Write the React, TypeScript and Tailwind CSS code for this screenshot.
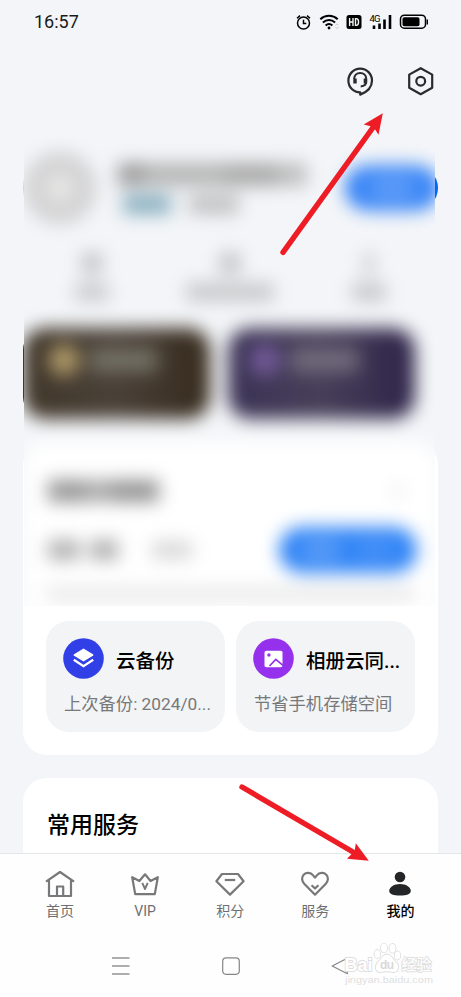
import React from "react";

const fontStack = "font-['Roboto','Noto_Sans_CJK_SC',sans-serif]";

function StatusBar() {
  return (
    <div className="flex h-11 shrink-0 items-center justify-between pl-[34px] pr-[32px]">
      <span className="text-[18px] leading-none text-[#1a1a1a]">16:57</span>
      <svg width="134" height="20" viewBox="295 12 134 20" fill="none" stroke="#000">
        <g strokeWidth="1.5">
          <circle cx="303.5" cy="23" r="6" />
          <path d="M303.5 19.8v3.8h2.8M297 18.2l3-2.6M310 18.2l-3-2.6" />
        </g>
        <g strokeWidth="2">
          <path d="M320.3 19.3c5-4.6 12.400-4.600 17.400 0M322.900 22.500c3.600-3.200 8.600-3.200 12.200 0M325.600 25.600c2-1.800 4.800-1.800 6.800 0" />
        </g>
        <circle cx="329" cy="28" r="1.4" fill="#000" stroke="none" />
        <path d="M335.500 25.500l1.500-1.700 1.500 1.700M335.500 27l1.500 1.700 1.500-1.700" stroke="#ccc" strokeWidth="1" />
        <rect x="346.500" y="15" width="15" height="14" rx="2.500" fill="#000" stroke="none" />
        <path d="M349.600 18v8M353 18v8M349.600 22h3.400M355.500 18.600v6.800h.8c3 0 3-6.800 0-6.800z" stroke="#f3f4f7" strokeWidth="1.4" />
        <text x="369.500" y="22" fontSize="9.500" fill="#000" stroke="none" textLength="11">4G</text>
        <path d="M374 25.500v3.500M379.500 23.500v5.500M384.500 19.500v9.500M390 15v14" strokeWidth="2.6" />
        <rect x="400.500" y="15.200" width="25" height="13" rx="3.800" strokeWidth="1.5" />
        <rect x="402.500" y="17.200" width="17" height="9" rx="1.800" fill="#000" stroke="none" />
        <path d="M427.300 19.500v5" strokeWidth="1.4" />
      </svg>
    </div>
  );
}

function Header() {
  return (
    <div className="flex h-[74px] shrink-0 items-center justify-end gap-[31px] pr-[25px]">
      <svg width="30" height="30" viewBox="345 66 30 30" fill="none" stroke="#292a2d" strokeWidth="2.200">
        <path d="M360.200 94.600v-2.200c-6.600 0-11.800-5-11.800-11.900 0-6.500 5.200-11.900 11.800-11.900s11.800 5.400 11.800 11.900c0 6.500-4.800 11.500-11.800 14.100z" strokeLinejoin="round" />
        <path d="M354.200 79v-.2c0-3.700 2.700-5.700 6-5.700s6 2 6 5.700v3.200c0 2.600-1.800 4-5.500 4.400" strokeWidth="2" />
        <path d="M355 78.500v5M365.400 78.500v5" strokeWidth="3.400" />
      </svg>
      <svg width="30" height="30" viewBox="406 66 30 30" fill="none" stroke="#292a2d" strokeWidth="2.200" strokeLinejoin="round">
        <path d="M420.700 68.200l11.500 6.400v13.200l-11.500 6.400-11.500-6.400V74.600z" />
        <circle cx="420.700" cy="81.200" r="4.400" />
      </svg>
    </div>
  );
}

function Profile() {
  return (
    <div className="flex h-[74px] items-center">
      <div className="flex size-[74px] items-center justify-center rounded-full bg-[#d4d4d5]">
        <div className="size-6 rounded-full bg-[#eaeae8]" />
      </div>
      <div className="ml-[21px] flex w-[192px] flex-col gap-[9px]">
        <div className="flex h-[23px]">
          <div className="w-[26px] bg-[#9c9c9c]" />
          <div className="w-[80px] bg-[#b5b5b5]" />
          <div className="w-[54px] bg-[#a9a9a9]" />
          <div className="w-[29px] bg-[#bebebe]" />
        </div>
        <div className="flex h-[19px] gap-[18px] pl-[5px]">
          <div className="w-[48px] bg-[#86adbe]" />
          <div className="w-[50px] bg-[#c0c0c1]" />
        </div>
      </div>
      <div className="ml-auto flex h-[44px] w-[92px] items-center justify-center rounded-full bg-[#0566f5]">
        <div className="flex h-[36px] w-[78px] items-center justify-center rounded-full bg-white/25">
          <div className="h-5 w-9 bg-white/15" />
        </div>
      </div>
    </div>
  );
}

function Stats() {
  return (
    <div className="mt-[28px] grid grid-cols-3 justify-items-center">
      <div className="flex flex-col items-center gap-[10px]">
        <div className="h-[20px] w-[20px] bg-[#c0c1c3]" />
        <div className="h-[18px] w-[34px] bg-[#c9cacc]" />
      </div>
      <div className="flex flex-col items-center gap-[10px]">
        <div className="h-[20px] w-[20px] bg-[#bebfc1]" />
        <div className="h-[18px] w-[88px] bg-[#c6c7c9]" />
      </div>
      <div className="flex flex-col items-center gap-[10px]">
        <div className="h-[20px] w-[10px] bg-[#c6c7c9]" />
        <div className="h-[18px] w-[34px] bg-[#c6c7c9]" />
      </div>
    </div>
  );
}

function Promos() {
  return (
    <div className="mt-[27px] flex gap-[18px]">
      <div className="h-[91px] w-[187px] rounded-[22px] bg-linear-to-r from-[#41372a] via-[#4a4139] to-[#362a1c] px-[25px] pt-[16px]">
        <div className="flex items-center gap-[10px]">
          <div className="size-[32px] rounded-full bg-[#ac9767]" />
          <div className="h-[24px] w-[68px] bg-[#727064]" />
        </div>
      </div>
      <div className="h-[91px] w-[187px] rounded-[22px] bg-linear-to-r from-[#3b3255] via-[#474059] to-[#2e2449] px-[21px] pt-[16px]">
        <div className="flex items-center gap-[10px]">
          <div className="size-[32px] rounded-full bg-[#715997]" />
          <div className="h-[24px] w-[68px] bg-[#716b7c]" />
        </div>
      </div>
    </div>
  );
}

function CloudTile({ icon, title, detail }: { icon?: React.ReactNode; title?: string; detail?: string }) {
  return (
    <div className="h-[111px] w-[179px] rounded-[23px] bg-[#f3f4f6] pl-[17px] pt-[17px]">
      <div className="flex items-center gap-3">
        {icon}
        <span className="mt-[6px] whitespace-nowrap text-[19.500px] font-medium leading-[28px] text-black">{title}</span>
      </div>
      <div className="mt-[13px] whitespace-nowrap pl-px text-[17.300px] leading-6 text-[#77787a]">{detail}</div>
    </div>
  );
}

function CloudCard({ children }: { children: React.ReactNode }) {
  return (
    <div className="mt-[22px] h-[314px] shrink-0 rounded-[24px] bg-white px-[23px] pt-[39px]">
      <div className="flex h-[22px] items-center justify-between pl-[2px] pr-[11px]">
        <div className="flex">
          <div className="h-[22px] w-[38px] bg-[#969696]" />
          <div className="h-[22px] w-[25px] bg-[#aaaaaa]" />
          <div className="h-[22px] w-[48px] bg-[#949494]" />
        </div>
        <div className="size-[12px] bg-[#ededed]" />
      </div>
      <div className="mt-[24px] flex h-[48px] items-center">
        <div className="ml-[2px] h-[20px] w-[32px] bg-[#b0b0b0]" />
        <div className="ml-[10px] h-[20px] w-[28px] bg-[#aeaeae]" />
        <div className="ml-[34px] h-[18px] w-[40px] bg-[#d8d8d8]" />
        <div className="ml-auto mr-[-2px] flex h-[46px] w-[138px] items-center justify-center gap-4 rounded-full bg-[#2e83f6]">
          <div className="h-6 w-[38px] bg-white/20" />
          <div className="h-6 w-[38px] bg-white/10" />
        </div>
      </div>
      <div className="mt-[13px] h-[14px] bg-[#e8e8e8]" />
      <div className="mt-[20px] flex gap-[11px]">{children}</div>
    </div>
  );
}

const layersIcon = (
  <svg width="41" height="41" viewBox="0 0 41 41" className="shrink-0">
    <circle cx="20.500" cy="20.500" r="20.300" fill="#303fe6" />
    <path d="M20.500 10.400l9.400 5.800c.8.500.8 1 0 1.500l-9.400 5.800-9.400-5.800c-.8-.5-.8-1 0-1.500z" fill="#fff" />
    <path d="M10.800 21.700l9.700 6.400 9.700-6.400" fill="none" stroke="#fff" strokeWidth="2.300" />
  </svg>
);

const photoIcon = (
  <svg width="41" height="41" viewBox="0 0 41 41" className="shrink-0">
    <circle cx="20.500" cy="20.500" r="20.300" fill="#9530ed" />
    <rect x="11.500" y="12.700" width="18" height="16.500" rx="1.800" fill="#fff" />
    <circle cx="15.900" cy="17" r="1.700" fill="#9530ed" />
    <path d="M16.500 28l6.300-6.600 7.200 6" fill="none" stroke="#9530ed" strokeWidth="1.700" />
  </svg>
);

function PrivacyBlur() {
  return (
    <div aria-hidden="true" className="absolute left-[24px] top-[18px] h-[470px] w-[411px] overflow-hidden bg-[#f3f5f8]">
      <div className="-ml-[24px] -mt-[18px] flex w-[461px] flex-col bg-[#f3f5f8] px-[23px] pt-[33px] blur-[9px]">
        <Profile />
        <Stats />
        <Promos />
        <CloudCard>
          <CloudTile />
          <CloudTile />
        </CloudCard>
      </div>
    </div>
  );
}

const tabs = [
  {
    label: "首页",
    icon: <path d="M2 12.600L16 3l14 9.600M5 10.800V27h22V10.800M13 26.500V17.500h6.200v9" />,
  },
  {
    label: "VIP",
    icon: (
      <>
        <path d="M3.200 8.200l3 16.900h19.600l3-16.900-7.200 3.800L16 5.300 10.400 12z" />
        <path d="M13.300 13.800l2.700 6.200 2.700-6.200" strokeWidth="1.900" />
      </>
    ),
  },
  {
    label: "积分",
    icon: (
      <>
        <path d="M8 5h16l5.600 7.200L16 25.600 2.400 12.200z" />
        <path d="M10.800 11h10.400" />
      </>
    ),
  },
  {
    label: "服务",
    icon: (
      <>
        <path d="M16 25.700L5.200 14.700C2.500 11.900 2.500 7.900 4.700 5.700c2.600-2.700 7-2.200 9.200.4L16 8.600l2.100-2.500c2.200-2.600 6.600-3.100 9.200-.4 2.200 2.200 2.200 6.200-.5 9z" />
        <path d="M12.500 16.300l3.500 3.100 3.500-3.100" />
      </>
    ),
  },
  {
    label: "我的",
    active: true,
    icon: (
      <g fill="#252628" stroke="none">
        <circle cx="16" cy="8" r="5.300" />
        <path d="M5.200 21.900c0-4.200 5.200-7 10.800-7s10.800 2.800 10.800 7c0 3.200-4.200 4.500-10.800 4.500S5.200 25.100 5.200 21.900z" />
      </g>
    ),
  },
];

function TabBar() {
  return (
    <nav className="flex h-[80px] pl-[17.500px] pr-[18px] pt-[15px]">
      {tabs.map((t) => (
        <div key={t.label} className="flex flex-1 flex-col items-center">
          <svg width="32" height="30" viewBox="0 0 32 30" fill="none" stroke="#777879" strokeWidth="2.200" strokeLinejoin="round">
            {t.icon}
          </svg>
          <span className={t.active ? "mt-[2px] text-[14px] font-medium leading-5 text-black" : "mt-[2px] text-[14px] leading-5 text-[#6d6e70]"}>
            {t.label}
          </span>
        </div>
      ))}
    </nav>
  );
}

function SystemBar() {
  return (
    <div className="mt-[21px] flex h-[22px] items-center justify-between pl-[110px] pr-[110px]">
      <svg width="22" height="22" viewBox="0 0 22 22" stroke="#939495" strokeWidth="1.300" fill="none">
        <path d="M2 3h17.500M2 11h17.500M2 19h17.500" />
      </svg>
      <svg width="22" height="22" viewBox="0 0 22 22" stroke="#858687" strokeWidth="1.200" fill="none">
        <rect x="2.700" y="2.900" width="16.600" height="16.400" rx="3.500" />
      </svg>
      <svg width="22" height="22" viewBox="0 0 22 22" stroke="#858687" strokeWidth="1.200" fill="none" strokeLinejoin="round">
        <path d="M3.200 11L18.300 3.300v15.400z" />
      </svg>
    </div>
  );
}

function Arrows() {
  return (
    <svg className="pointer-events-none absolute inset-0" width="461" height="997" fill="#ee1c25" stroke="#ee1c25">
      <path d="M283 252.300L373 127.500" strokeWidth="5.400" strokeLinecap="round" />
      <path d="M382.800 113.200l-19.100 11.200 7 1.800 4.600 3.600 3.200 5z" stroke="none" />
      <path d="M242 787l111 65" strokeWidth="5.400" strokeLinecap="round" />
      <path d="M368.800 860.800l-13-17.500-1 6.700-3.500 4.200-4.300 4.500z" stroke="none" />
    </svg>
  );
}

function Watermark() {
  return (
    <svg className="pointer-events-none absolute left-[340px] top-[938px]" width="100" height="50" viewBox="340 938 100 50">
      <g fill="#fff" stroke="#dedede" strokeWidth="1.800" style={{ paintOrder: "stroke" }}>
        <ellipse cx="377.300" cy="954" rx="2.800" ry="4" />
        <ellipse cx="384" cy="948" rx="3" ry="4.400" />
        <ellipse cx="392.500" cy="948.300" rx="3" ry="4.400" />
        <ellipse cx="397.500" cy="955.500" rx="2.800" ry="4" />
        <path d="M387 954.500c4 0 5.500 4.500 8.500 7.200 4.500 4 3 10.300-2 10.300-3 0-4-.7-6.500-.7s-4 .7-6.500.7c-5 0-6.500-6-2-10.300 3-2.700 4.500-7.200 8.500-7.200z" />
        <text x="344.500" y="971" fontSize="18" fontWeight="700" fontFamily="Liberation Sans" textLength="28" lengthAdjust="spacingAndGlyphs">Bai</text>
        <text x="401.500" y="970" fontSize="15" fontWeight="500" fontFamily="Noto Sans CJK SC" textLength="30">经验</text>
      </g>
      <text x="380" y="969" fontSize="12" fontWeight="700" fontFamily="Liberation Sans" fill="#d9d9d9" textLength="14">du</text>
      <text x="345" y="983" fontSize="9.500" fontFamily="Liberation Sans" fill="#dedede" textLength="88" lengthAdjust="spacingAndGlyphs">jingyan.baidu.com</text>
    </svg>
  );
}

export default function App() {
  return (
    <div className={`relative flex h-[997px] w-[461px] flex-col overflow-hidden bg-[#f3f5f8] ${fontStack}`}>
      <StatusBar />
      <Header />
      <main className="relative flex h-[735px] shrink-0 flex-col overflow-hidden px-[23px] pt-[33px]">
        <Profile />
        <Stats />
        <Promos />
        <CloudCard>
          <CloudTile icon={layersIcon} title="云备份" detail="上次备份: 2024/0..." />
          <CloudTile icon={photoIcon} title="相册云同..." detail="节省手机存储空间" />
        </CloudCard>
        <section className="mt-[23px] h-[200px] shrink-0 rounded-[24px] bg-white px-6 pt-[32px]">
          <h2 className="text-[23px] font-medium leading-8 text-black">常用服务</h2>
        </section>
        <PrivacyBlur />
      </main>
      <footer className="flex flex-1 flex-col border-t border-[#e4e7ea] bg-[#fefefe]">
        <TabBar />
        <SystemBar />
      </footer>
      <Arrows />
      <Watermark />
    </div>
  );
}
